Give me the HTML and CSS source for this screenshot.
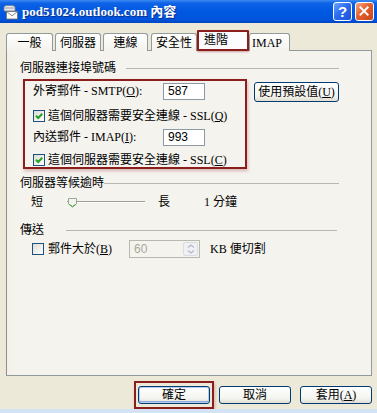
FILE: index.html
```html
<!DOCTYPE html>
<html lang="zh-Hant">
<head>
<meta charset="utf-8">
<title>pod51024.outlook.com 內容</title>
<link rel="stylesheet" href="styles.css">
</head>
<body>
<div class="window">
  <div class="titlebar">
    <svg class="app-icon" viewBox="0 0 16 16" width="16" height="16">
      <path d="M2 3.5 Q2 1.5 5 1.5 L10 1.5 Q13 1.5 13 3.5 L13 7 L2 7 Z" fill="#e6e6ea" stroke="#7b7f8c" stroke-width="0.8"/>
      <path d="M3 4 L12 4" stroke="#9aa0ae" stroke-width="1"/>
      <rect x="4.5" y="7.5" width="11" height="7.5" fill="#fbfbf6" stroke="#6d6f78" stroke-width="0.8"/>
      <path d="M4.8 7.8 L10 11.8 L15.2 7.8" fill="none" stroke="#6d6f78" stroke-width="0.8"/>
    </svg>
    <span class="title">pod51024.outlook.com 內容</span>
    <div class="caption-btns">
      <span class="cap help">?</span>
      <span class="cap close"><svg viewBox="0 0 19 19" width="17" height="17"><path d="M5 5 L13 13 M13 5 L5 13" stroke="#fff" stroke-width="2.2" stroke-linecap="square"/></svg></span>
    </div>
  </div>

  <div class="client">
    <div class="tabs">
      <span class="tab t1">一般</span>
      <span class="tab t2">伺服器</span>
      <span class="tab t3">連線</span>
      <span class="tab t4">安全性</span>
      <span class="tab t5 active">進階</span>
      <span class="tab t6">IMAP</span>
    </div>

    <div class="panel">
      <div class="group-head">
        <span>伺服器連接埠號碼</span><i class="rule rule-ports"></i>
      </div>

      <div class="ports-row">
        <div class="highlight ports-box">
          <div class="field-row">
            <span class="field-label">外寄郵件 - SMTP(<u>O</u>):</span>
            <span class="input">587</span>
          </div>
          <div class="check-row check-first">
            <span class="checkbox checked"><svg viewBox="0 0 10 10" width="10" height="10"><path d="M2 4.8 L4.2 7 L8.2 2.8" fill="none" stroke="#21a121" stroke-width="2"/></svg></span>
            <span>這個伺服器需要安全連線 - SSL(<u>Q</u>)</span>
          </div>
          <div class="field-row field-second">
            <span class="field-label">內送郵件 - IMAP(<u>I</u>):</span>
            <span class="input">993</span>
          </div>
          <div class="check-row check-second">
            <span class="checkbox checked"><svg viewBox="0 0 10 10" width="10" height="10"><path d="M2 4.8 L4.2 7 L8.2 2.8" fill="none" stroke="#21a121" stroke-width="2"/></svg></span>
            <span>這個伺服器需要安全連線 - SSL(<u>C</u>)</span>
          </div>
        </div>
        <button class="btn btn-default-values">使用預設值(<u>U</u>)</button>
      </div>

      <div class="group-head head-timeout">
        <span>伺服器等候逾時</span><i class="rule rule-timeout"></i>
      </div>

      <div class="slider-row">
        <span>短</span>
        <svg class="slider" viewBox="0 0 78 12" width="78" height="12">
          <line x1="0" y1="5.5" x2="78" y2="5.5" stroke="#9d9c95" stroke-width="1"/>
          <line x1="0" y1="6.5" x2="78" y2="6.5" stroke="#ffffff" stroke-width="1"/>
          <path d="M1.5 2.5 L9.5 2.5 L9.5 8 L5.5 11 L1.5 8 Z" fill="#f4f3ee" stroke="#7e9a80" stroke-width="0.8"/>
          <path d="M2.5 8.5 L5.5 10.6 L8.5 8.5" fill="none" stroke="#37a32c" stroke-width="1"/>
        </svg>
        <span class="long">長</span>
        <span class="minutes">1 分鐘</span>
      </div>

      <div class="group-head head-send">
        <span>傳送</span><i class="rule rule-send"></i>
      </div>

      <div class="send-row">
        <span class="checkbox"></span>
        <span class="send-label">郵件大於(<u>B</u>)</span>
        <span class="spin">
          <span class="spin-value">60</span>
          <span class="spin-btn"><svg viewBox="0 0 12 14" width="12" height="14"><path d="M3 5.5 L6 3 L9 5.5 M3 8.5 L6 11 L9 8.5" fill="none" stroke="#b4b8c4" stroke-width="1.2"/></svg></span>
        </span>
        <span class="kb">KB 便切割</span>
      </div>
    </div>

    <div class="footer">
      <div class="highlight ok-box"><button class="btn default">確定</button></div>
      <button class="btn cancel">取消</button>
      <button class="btn apply">套用(<u>A</u>)</button>
    </div>
  </div>
  <div class="bottom-strip"></div>
</div>
</body>
</html>
```

FILE: styles.css
```css
* { box-sizing: border-box; }
html, body { margin: 0; padding: 0; }
body {
  width: 377px;
  height: 413px;
  overflow: hidden;
  background: #ece9d8;
  font-family: "Liberation Serif", "Noto Sans CJK TC", serif;
  font-size: 12px;
  line-height: 14px;
  color: #000;
}
u { text-decoration: underline; text-underline-offset: 1px; }

.window { display: flex; flex-direction: column; height: 413px; }

/* title bar */
.titlebar {
  height: 23px;
  flex: none;
  display: flex;
  align-items: center;
  padding: 0 3px 0 2px;
  background: linear-gradient(#3d8af2 0%, #0d62e6 14%, #0058e2 50%, #0054dc 86%, #0044bd 100%);
  color: #fff;
}
.app-icon { flex: none; }
.title {
  flex: 1;
  margin-left: 4px;
  font-weight: bold;
  font-size: 13px;
  text-shadow: 1px 1px 0 #0b2f8c;
  white-space: nowrap;
}
.caption-btns { display: flex; gap: 3px; }
.cap {
  width: 19px;
  height: 19px;
  border: 1px solid #fff;
  border-radius: 3px;
  display: flex;
  align-items: center;
  justify-content: center;
}
.help {
  background: linear-gradient(135deg, #6aa6ff 0%, #2e6cf0 45%, #1c50d6 100%);
  font: bold 15px/1 "Liberation Sans", sans-serif;
  color: #fff;
}
.close { background: linear-gradient(135deg, #f4a888 0%, #e2602f 45%, #c9441c 100%); }

/* client area */
.client {
  flex: 1;
  display: flex;
  flex-direction: column;
  padding: 7px 5px 0 6px;
}

.tabs {
  display: flex;
  align-items: flex-end;
  height: 21px;
  position: relative;
  z-index: 1;
}
.tab {
  height: 18px;
  border: 1px solid #919b9c;
  border-bottom: none;
  border-radius: 3px 3px 0 0;
  background: linear-gradient(#ffffff, #f3f2ec);
  display: flex;
  align-items: center;
  justify-content: center;
  white-space: nowrap;
}
.t1 { width: 47px; margin-right: 2px; }
.t2 { width: 46px; margin-right: 2px; }
.t3 { width: 45px; margin-right: 3px; }
.t4 { width: 46px; }
.t5 { width: 52px; }
.t6 { width: 41px; justify-content: flex-start; padding-left: 2px; }
.tab.active {
  height: 21px;
  background: #fcfcfe;
  border: 2px solid #8c1d1d;
  border-radius: 1px;
  box-shadow: 0 1px 2px rgba(160, 60, 60, 0.45);
  justify-content: flex-start;
  padding-left: 5px;
  align-items: flex-start;
  padding-top: 1px;
}

.panel {
  margin-top: -1px;
  height: 326px;
  flex: none;
  border: 1px solid #919b9c;
  border-left-color: #8a9192;
  background: linear-gradient(90deg, #f7efe6 0px, #f4f3ee 8px, #f4f3ee 100%);
  padding: 10px 0 0 13px;
}

.group-head {
  display: flex;
  align-items: center;
  height: 14px;
}
.rule {
  flex: 1;
  height: 1px;
  background: #b9b8b0;
  margin-right: 32px;
}
.rule-ports { margin-left: 10px; }
.rule-timeout { margin-left: 0; }
.rule-send { margin-left: 22px; margin-right: 34px; }

.ports-row {
  display: flex;
  align-items: flex-start;
  margin-top: 4px;
  margin-left: 3px;
}
.highlight {
  border: 2px solid #8c1d1d;
  box-shadow: 1px 2px 3px rgba(170, 70, 70, 0.35);
}
.ports-box {
  width: 224px;
  height: 90px;
  padding: 1px 0 0 8px;
}
.field-row {
  display: flex;
  align-items: center;
  height: 18px;
}
.field-label { width: 130px; white-space: nowrap; }
.input {
  width: 42px;
  height: 17px;
  border: 1px solid #8d9aa6;
  background: #fff;
  font: 12px/15px "Liberation Sans", sans-serif;
  padding-left: 4px;
}
.check-row {
  display: flex;
  align-items: center;
  height: 14px;
  white-space: nowrap;
}
.check-first { margin-top: 9px; }
.field-second { margin-top: 5px; }
.check-second { margin-top: 7px; }

.checkbox {
  width: 12px;
  height: 12px;
  flex: none;
  border: 1px solid #1c5180;
  background: linear-gradient(135deg, #dcdcd5, #ffffff);
  display: flex;
  align-items: center;
  justify-content: center;
  margin-right: 3px;
}

.btn {
  font-family: "Liberation Serif", "Noto Sans CJK TC", serif;
  font-size: 12px;
  line-height: 14px;
  color: #000;
  border: 1px solid #003c74;
  border-radius: 3px;
  background: linear-gradient(#ffffff 0%, #f4f4f0 70%, #e0ddd2 100%);
  padding: 0;
  white-space: nowrap;
}
.btn-default-values {
  width: 85px;
  height: 20px;
  margin-left: 7px;
  margin-top: 3px;
}

.head-timeout { margin-top: 7px; }
.slider-row {
  display: flex;
  align-items: center;
  height: 16px;
  margin-top: 4px;
  padding-left: 11px;
}
.slider { margin-left: 24px; flex: none; }
.long { margin-left: 13px; }
.minutes { margin-left: 34px; }

.head-send { margin-top: 13px; }
.send-row {
  display: flex;
  align-items: center;
  height: 18px;
  margin-top: 3px;
  padding-left: 12px;
}
.send-row .checkbox { margin-right: 4px; }
.send-label { width: 81px; white-space: nowrap; }
.spin {
  width: 71px;
  height: 18px;
  border: 1px solid #b9b8ae;
  background: #f4f3ee;
  display: flex;
  align-items: center;
  justify-content: space-between;
  padding: 0 1px 0 4px;
}
.spin-value { font: 12px/14px "Liberation Sans", sans-serif; color: #aca899; }
.spin-btn {
  width: 15px;
  height: 14px;
  border: 1px solid #d8dce4;
  border-radius: 2px;
  background: #eef0f4;
  display: flex;
  align-items: center;
  justify-content: center;
}
.kb { margin-left: 10px; white-space: nowrap; }

.footer {
  display: flex;
  justify-content: flex-end;
  align-items: center;
  margin-top: 5px;
  height: 28px;
}
.ok-box {
  width: 80px;
  height: 28px;
  display: flex;
  align-items: center;
  justify-content: center;
}
.footer .btn { width: 72px; height: 18px; }
.btn.default { box-shadow: inset 0 0 0 1px #b7cbee, inset 0 -1px 0 1px #8fa9de; }
.cancel { margin-left: 5px; }
.apply { margin-left: 9px; }

.bottom-strip {
  height: 4px;
  flex: none;
  background: #d3e2f5;
}
```
